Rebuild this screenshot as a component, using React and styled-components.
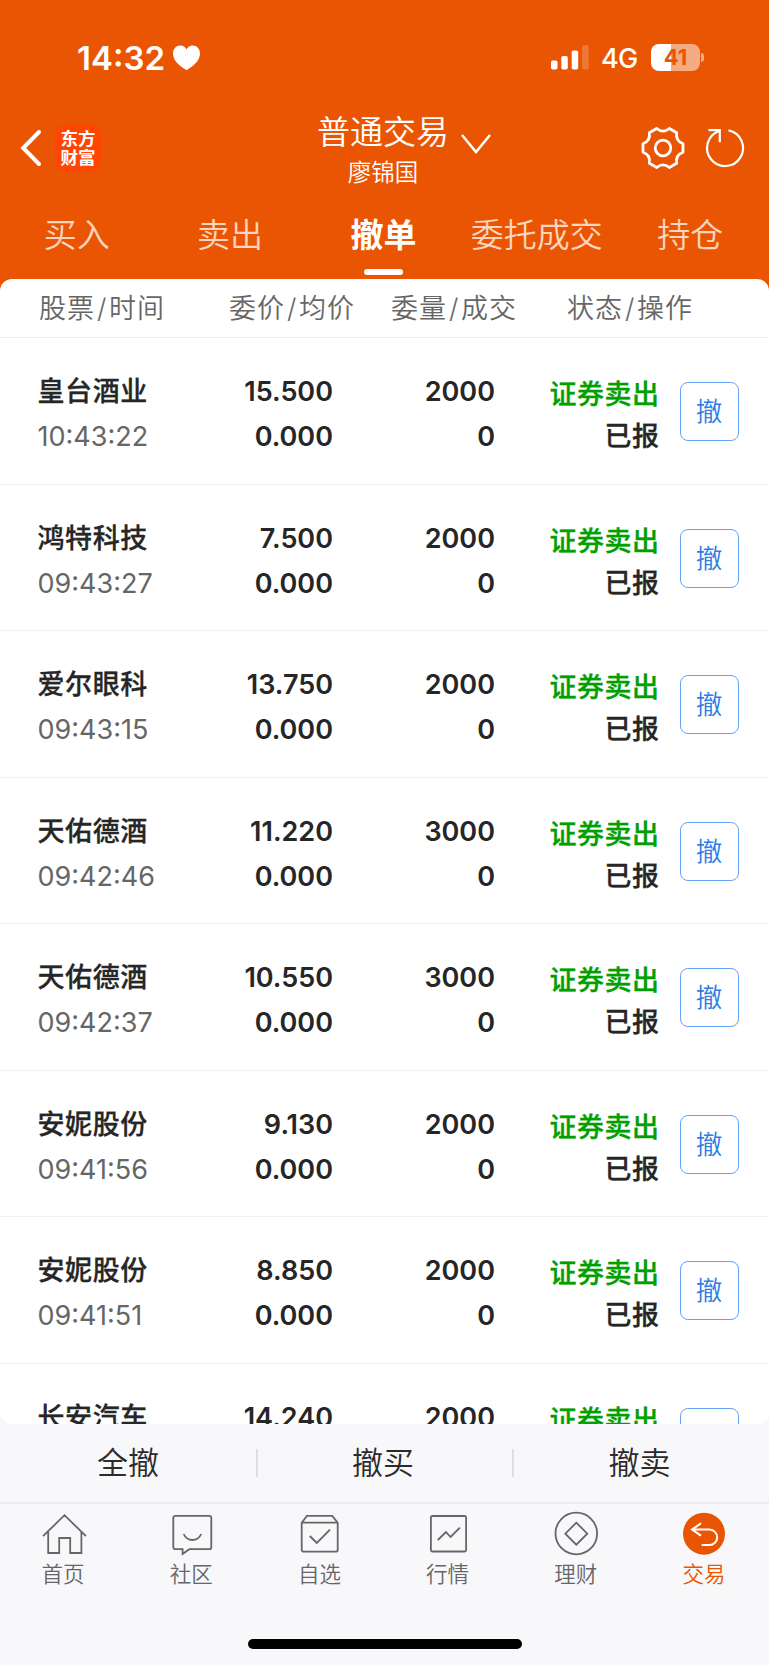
import React from "react";
import styled, { createGlobalStyle } from "styled-components";

const tabs = ["买入", "卖出", "撤单", "委托成交", "持仓"];

const columns = [
  ["股票", "时间"],
  ["委价", "均价"],
  ["委量", "成交"],
  ["状态", "操作"],
];

const orders = [
  { name: "皇台酒业", time: "10:43:22", price: "15.500", amount: "2000" },
  { name: "鸿特科技", time: "09:43:27", price: "7.500", amount: "2000" },
  { name: "爱尔眼科", time: "09:43:15", price: "13.750", amount: "2000" },
  { name: "天佑德酒", time: "09:42:46", price: "11.220", amount: "3000" },
  { name: "天佑德酒", time: "09:42:37", price: "10.550", amount: "3000" },
  { name: "安妮股份", time: "09:41:56", price: "9.130", amount: "2000" },
  { name: "安妮股份", time: "09:41:51", price: "8.850", amount: "2000" },
  // only the first line of this one is above the fold
  { name: "长安汽车", price: "14.240", amount: "2000", folded: true },
];

const navItems = [
  {
    label: "首页",
    icon: <path d="M1 25.2 22.5 4.2 44 25.2M6.2 21v21h11V27h11v15h11.2V21" />,
  },
  {
    label: "社区",
    icon: (
      <>
        <path d="M5.3 4.9h34a2 2 0 0 1 2 2v29.3a2 2 0 0 1-2 2H19.3L12.6 43v-4.8H5.3a2 2 0 0 1-2-2V6.9a2 2 0 0 1 2-2Z" />
        <path d="M13.7 23c3.5 8 14 8 17.5 0" />
      </>
    ),
  },
  {
    label: "自选",
    icon: (
      <>
        <path d="M3.7 11.7 8.9 4.9h25.4l5.4 6.8v27a2 2 0 0 1-2 2h-32a2 2 0 0 1-2-2ZM3.7 11.7h36" />
        <path d="m11.8 25 7 7L32 18.7" />
      </>
    ),
  },
  {
    label: "行情",
    icon: (
      <>
        <rect x="3.9" y="5" width="35.2" height="35.5" rx="1.5" />
        <path d="m10.8 29 8.1-8 4.7 5 9.3-9.3" />
      </>
    ),
  },
  {
    label: "理财",
    icon: (
      <>
        <circle cx="21.3" cy="22.5" r="20.8" />
        <path d="m21.3 11.7 11 11-11 11-11-11Z" />
      </>
    ),
  },
  {
    label: "交易",
    active: true,
    icon: (
      <>
        <circle cx="21" cy="22.7" r="21" fill="#ea5504" stroke="none" />
        <path
          d="m18 12.3-9 6.3 9 6M9 18.6h17.5a7.7 7.7 0 0 1 0 15.4h-7.8"
          stroke="#fff"
          strokeWidth="2"
        />
      </>
    ),
  },
];

const App = () => {
  return (
    <>
      <GlobalStyle />
      <Screen>
        <Header>
          <StatusBar>
            <Clock>14:32</Clock>
            <svg width="27" height="26" viewBox="0 0 27 26" fill="#fff">
              <path d="M13.5 25.3C8 22 0 16.5 0 8.6 0 3.9 3.2.5 7.3.5c2.7 0 5 1.5 6.2 3.9C14.7 2 17 .5 19.7.5 23.8.5 27 3.9 27 8.6c0 7.9-8 13.4-13.5 16.7Z" />
            </svg>
            <Spacer />
            <Signal width="38" height="25" viewBox="0 0 38 25" fill="#fff">
              <rect x="0" y="15.5" width="6.5" height="9" rx="1.8" />
              <rect x="10.3" y="11" width="6.5" height="13.5" rx="1.8" />
              <rect x="20.7" y="5.5" width="6.5" height="19" rx="1.8" />
              <rect x="31" y=".3" width="6.7" height="24.2" rx="1.8" opacity=".2" />
            </Signal>
            <Network>4G</Network>
            <Battery>41</Battery>
            <BatteryTip />
          </StatusBar>
          <TitleBar>
            <BackIcon width="20" height="36" viewBox="0 0 20 36" fill="none">
              <path d="M18 2 2.2 18 18 34" stroke="#fff" strokeWidth="4" strokeLinecap="round" />
            </BackIcon>
            <Logo>
              <span>东方</span>
              <span>财富</span>
            </Logo>
            <Title>
              <h1>普通交易</h1>
              <p>廖锦国</p>
            </Title>
            <DropIcon width="30" height="20" viewBox="0 0 30 20" fill="none">
              <path d="m1 1 14 17L29 1" stroke="#fff" strokeWidth="2.5" />
            </DropIcon>
            <Spacer />
            <svg
              width="44"
              height="44"
              viewBox="0 0 44 44"
              fill="none"
              stroke="#fff"
              strokeWidth="2.8"
              strokeLinejoin="round"
            >
              <path d="M15.7 2.5Q22 7.8 28.3 2.5L35.7 6.8Q34.3 14.9 42 17.7V26.3Q34.3 29.1 35.7 37.2L28.3 41.5Q22 36.2 15.7 41.5L8.3 37.2Q9.7 29.1 2 26.3V17.7Q9.7 14.9 8.3 6.8Z" />
              <circle cx="22" cy="22" r="7.8" />
            </svg>
            <RefreshIcon width="40" height="40" viewBox="0 0 40 40" fill="none">
              <path d="M23.5 2.4A18 18 0 1 1 14.3 3" stroke="#fff" strokeWidth="2.2" />
              <path d="M3.5 2.2h11.3v12" stroke="#fff" strokeWidth="2.2" />
            </RefreshIcon>
          </TitleBar>
          <Tabs>
            {tabs.map((tab) => (
              <Tab key={tab} $active={tab === "撤单"}>
                {tab}
              </Tab>
            ))}
          </Tabs>
        </Header>

        <Card>
          <TableHead>
            {columns.map(([first, second]) => (
              <div key={first}>
                {first}
                <span>/</span>
                {second}
              </div>
            ))}
          </TableHead>
          {orders.map((order) => (
            <Row key={order.name + order.price}>
              <Stock>
                <strong>{order.name}</strong>
                {!order.folded && <span>{order.time}</span>}
              </Stock>
              <Numbers>
                <span>{order.price}</span>
                {!order.folded && <span>0.000</span>}
              </Numbers>
              <Numbers>
                <span>{order.amount}</span>
                {!order.folded && <span>0</span>}
              </Numbers>
              <State>
                <em>证券卖出</em>
                {!order.folded && <span>已报</span>}
              </State>
              <CancelButton>{!order.folded && "撤"}</CancelButton>
            </Row>
          ))}
        </Card>

        <Actions>
          <button>全撤</button>
          <button>撤买</button>
          <button>撤卖</button>
        </Actions>

        <Nav>
          {navItems.map((item) => (
            <NavItem key={item.label} $active={item.active}>
              <svg width="44" height="44" viewBox="0 0 44 44">
                {item.icon}
              </svg>
              <span>{item.label}</span>
            </NavItem>
          ))}
        </Nav>
        <HomeIndicator />
      </Screen>
    </>
  );
};

const GlobalStyle = createGlobalStyle`
  * {
    box-sizing: border-box;
  }
  body {
    margin: 0;
    background: #f8f8fb;
    font-family: Inter, "Noto Sans CJK SC", sans-serif;
  }
  h1, p {
    margin: 0;
  }
  button {
    padding: 0;
    border: 0;
    background: none;
    font-family: inherit;
  }
  svg {
    display: block;
    flex: none;
    overflow: visible;
  }
`;

const Screen = styled.div`
  display: flex;
  flex-direction: column;
  width: 769px;
  height: 1665px;
  overflow: hidden;
  background: linear-gradient(#ea5504 300px, #f8f8fb 300px);
`;

const Header = styled.header`
  flex: none;
  height: 279px;
  color: #fff;
`;

const Spacer = styled.div`
  flex: 1;
`;

const StatusBar = styled.div`
  display: flex;
  align-items: center;
  height: 115px;
  padding: 0 65px 0 77px;
`;

const Clock = styled.div`
  width: 96px;
  font-size: 33px;
  font-weight: 600;
`;

const Signal = styled.svg`
  margin-right: 12px;
`;

const Network = styled.div`
  width: 50px;
  margin-top: 1px;
  font-size: 27px;
  font-weight: 500;
  letter-spacing: -0.8px;
`;

const Battery = styled.div`
  width: 49px;
  height: 27px;
  border-radius: 8px;
  background: linear-gradient(90deg, #fff 20px, #f5ab82 20px);
  color: #ea5504;
  font-size: 22px;
  font-weight: 700;
  line-height: 27px;
  text-align: center;
`;

const BatteryTip = styled.div`
  width: 3px;
  height: 9px;
  margin-left: 1px;
  border-radius: 0 4px 4px 0;
  background: #f5ab82;
`;

const TitleBar = styled.div`
  display: flex;
  align-items: center;
  height: 65px;
  padding: 0 24px 0 21px;
`;

const BackIcon = styled.svg`
  margin-right: 14px;
`;

const Logo = styled.div`
  display: flex;
  flex-direction: column;
  align-items: center;
  justify-content: center;
  width: 46px;
  height: 46px;
  border-radius: 10px;
  background: #ff4503;
  & > span {
    font-size: 17.5px;
    font-weight: 700;
    line-height: 19px;
  }
`;

const Title = styled.div`
  width: 132px;
  margin: 11px 0 0 216px;
  text-align: center;
  white-space: nowrap;
  & > h1 {
    font-size: 33px;
    font-weight: 350;
    line-height: 39px;
  }
  & > p {
    font-size: 23.5px;
    font-weight: 350;
    line-height: 41px;
  }
`;

const DropIcon = styled.svg`
  margin: -8px 0 0 12px;
`;

const RefreshIcon = styled.svg`
  margin-left: 20px;
`;

const Tabs = styled.nav`
  display: flex;
  height: 99px;
  margin-right: 2px;
`;

const Tab = styled.div`
  display: flex;
  flex-direction: column;
  align-items: center;
  width: 20%;
  padding-top: 31px;
  color: ${({ $active }) => ($active ? "#fff" : "#fbd5bf")};
  font-size: 33px;
  font-weight: ${({ $active }) => ($active ? 700 : 350)};
  line-height: 48px;
  white-space: nowrap;
  &::after {
    content: "";
    width: 39px;
    height: 6px;
    margin: 10px 0 0 1px;
    border-radius: 3px;
    background: ${({ $active }) => ($active ? "#fff" : "none")};
  }
`;

const Card = styled.main`
  flex: none;
  height: 1145px;
  overflow: hidden;
  border-radius: 12px;
  background: #fff;
`;

const TableHead = styled.div`
  display: grid;
  grid-template-columns: 190px 162px 176px 1fr;
  align-items: center;
  height: 59px;
  padding: 0 0 3px 39px;
  border-bottom: 1px solid #ececee;
  color: #666;
  font-size: 27px;
  font-weight: 350;
  letter-spacing: 1px;
  white-space: nowrap;
  & span {
    padding: 0 1.5px 0 2px;
  }
`;

const Row = styled.div`
  display: grid;
  grid-template-columns: 150px 145.5px 162px 164.5px 59px;
  height: 146.5px;
  padding: 31px 0 0 37.5px;
  border-bottom: 1px solid #f2f2f3;
  color: #262626;
`;

const Column = styled.div`
  display: flex;
  flex-direction: column;
  font-size: 27px;
  line-height: 45px;
  white-space: nowrap;
`;

const Stock = styled(Column)`
  & > strong {
    font-weight: 500;
    letter-spacing: 0.6px;
    -webkit-text-stroke: 0.3px;
  }
  & > span {
    color: #666;
  }
`;

const Numbers = styled(Column)`
  align-items: flex-end;
  font-weight: 600;
`;

const State = styled(Column)`
  align-items: flex-end;
  padding-top: 5px;
  font-weight: 500;
  letter-spacing: 0.5px;
  line-height: 42px;
  -webkit-text-stroke: 0.3px;
  & > em {
    color: #00a000;
    font-style: normal;
  }
`;

const CancelButton = styled.button`
  width: 59px;
  height: 59px;
  margin: 13px 0 0 20.5px;
  padding: 0 1px 4px 0;
  border: 1.3px solid #64a3f6;
  border-radius: 8px;
  color: #2e7de6;
  font-size: 26.5px;
  font-weight: 350;
`;

const Actions = styled.div`
  display: grid;
  grid-template-columns: 256px 256px 1fr;
  align-items: center;
  flex: none;
  height: 80px;
  border-bottom: 2px solid #ececee;
  & > button {
    height: 28px;
    color: #2b2b2b;
    font-size: 31px;
    font-weight: 350;
    line-height: 28px;
  }
  & > button + button {
    padding-right: 4px;
    border-left: 2px solid #dfdfe2;
  }
`;

const Nav = styled.nav`
  display: flex;
  flex: none;
  height: 135px;
  padding-top: 7px;
`;

const NavItem = styled.div`
  display: flex;
  flex: 1;
  flex-direction: column;
  align-items: center;
  color: ${({ $active }) => ($active ? "#ea5504" : "#666")};
  font-size: 21.5px;
  font-weight: 350;
  line-height: 30px;
  & > svg {
    fill: none;
    stroke: #666;
    stroke-width: 1.8;
  }
  & > span {
    margin: 4px 2px 0 0;
  }
`;

const HomeIndicator = styled.div`
  flex: none;
  align-self: center;
  width: 274px;
  height: 10px;
  border-radius: 5px;
  background: #000;
`;

export default App;
